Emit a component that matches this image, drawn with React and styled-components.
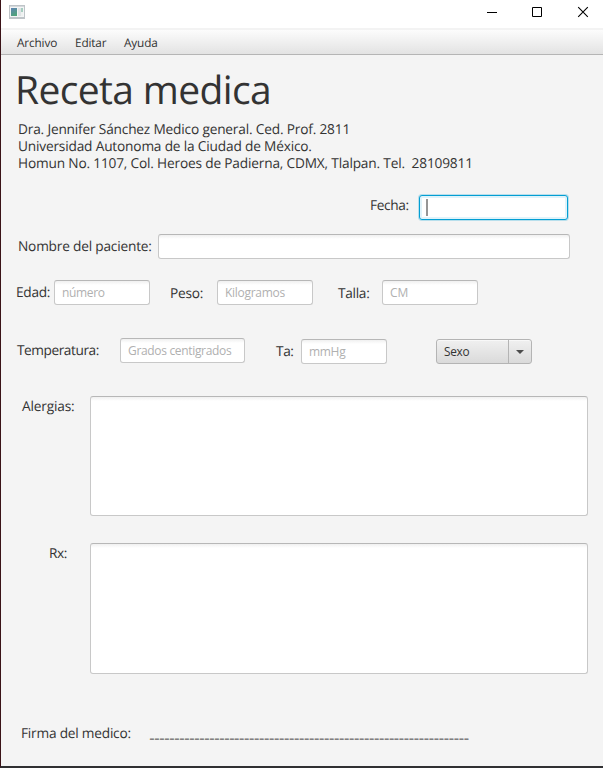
import React from 'react';
import styled, { createGlobalStyle, css } from 'styled-components';

const GlobalStyle = createGlobalStyle`
  * { box-sizing: border-box; }
  html, body { margin: 0; padding: 0; background: #f4f4f4; overflow: hidden; }
  body {
    font-family: 'Open Sans', 'Noto Sans', sans-serif;
    color: #333;
    text-rendering: geometricPrecision;
  }
`;

const Window = styled.div`
  display: flex;
  flex-direction: column;
  width: 603px;
  height: 768px;
  background: #f4f4f4;
  border-left: 1px solid #3a1217;
  border-bottom: 2px solid #303032;
`;

const TitleBar = styled.header`
  display: flex;
  align-items: flex-start;
  justify-content: space-between;
  height: 28px;
  padding: 5px 14px 0 8px;
  background: #fff;
`;

const Controls = styled.div`
  display: flex;
  gap: 34px;
  padding-top: 1px;
  svg { display: block; }
`;

const MenuBar = styled.nav`
  display: flex;
  height: 27px;
  padding-left: 16px;
  border-top: 2px solid #f3f3f3;
  border-bottom: 1px solid #b5b5b5;
  background: linear-gradient(#fcfcfc, #e3e3e3) padding-box;
`;

const MenuItem = styled.span`
  width: ${(p) => p.$w}px;
  font-size: 11.8px;
  line-height: 26px;
  letter-spacing: -0.15px;
`;

const Form = styled.main`
  display: flex;
  flex-direction: column;
  flex: 1;
  padding-top: 10px;
`;

const Title = styled.h1`
  margin: 0 0 6px 14px;
  height: 50px;
  font-size: 39px;
  font-weight: 400;
  line-height: 50px;
  letter-spacing: -0.64px;
`;

const textBase = css`
  font-size: 13.7px;
  line-height: 17px;
  white-space: pre;
  letter-spacing: ${(p) => p.$ls || 0}px;
`;

const InfoLine = styled.p`
  ${textBase}
  margin: 0 0 0 17px;
`;

const Row = styled.div`
  display: flex;
  align-items: flex-start;
  margin-top: ${(p) => p.$gap}px;
  padding-left: ${(p) => p.$left}px;
  height: ${(p) => p.$h || 25}px;
`;

const Label = styled.label`
  ${textBase}
  flex: none;
  width: ${(p) => p.$w}px;
  margin-top: ${(p) => p.$drop || 0}px;
  margin-left: ${(p) => p.$ml || 0}px;
`;

const box = css`
  flex: none;
  display: block;
  margin: ${(p) => p.$drop || 0}px 0 0;
  width: ${(p) => p.$w}px;
  border: 1px solid #c8c8c8;
  border-top-color: #b7b7b7;
  border-radius: 3px;
  outline: none;
  background: linear-gradient(#f0f0f0, #fff 4px);
  color: #333;
  font-family: inherit;
`;

const Input = styled.input`
  ${box}
  height: 25px;
  padding: 0 7px;
  font-size: 12px;
  letter-spacing: ${(p) => p.$ls || 0}px;
  &::placeholder { color: #b0b0b0; opacity: 1; }
`;

const FocusedField = styled.div`
  ${box}
  height: 25px;
  padding: 3px 0 0 6px;
  border-color: #039ed3;
  background: #fff;
  box-shadow: 0 0 0 1px rgba(3, 158, 211, 0.25), inset 0 0 0 2px #e0f3fa;
`;

const Caret = styled.span`
  display: block;
  width: 2px;
  height: 17px;
  background: #969696;
`;

const TextArea = styled.textarea`
  ${box}
  height: ${(p) => p.$h}px;
  resize: none;
`;

const Combo = styled.button`
  display: flex;
  flex: none;
  width: 96px;
  height: 25px;
  margin: 1px 0 0 49px;
  padding: 0;
  border: 1px solid #b4b4b4;
  border-radius: 3px;
  background: linear-gradient(#f0f0f0, #dadada);
  box-shadow: inset 0 1px 0 #f8f8f8;
  color: #333;
  font-family: inherit;
  font-size: 11.8px;
  letter-spacing: -0.25px;
  line-height: 23px;
  text-align: left;
`;

const ComboText = styled.span`
  width: 72px;
  height: 23px;
  padding-left: 7px;
  border-right: 1px solid #b4b4b4;
`;

const ComboArrow = styled.span`
  display: flex;
  flex: 1;
  height: 23px;
  align-items: center;
  justify-content: center;
`;

const SignatureLine = styled.span`
  margin-top: 1px;
  font-size: 9.3px;
  font-weight: 700;
  line-height: 17px;
  letter-spacing: 1.17px;
  white-space: nowrap;
  -webkit-text-stroke: 0.2px #333;
`;

const AppIcon = () => (
  <svg width="16" height="14" viewBox="0 0 16 14" shapeRendering="crispEdges">
    <defs>
      <linearGradient id="pane" x1="0" y1="0" x2="0.4" y2="1">
        <stop offset="0" stopColor="#5f82b4" />
        <stop offset="1" stopColor="#4fa27c" />
      </linearGradient>
    </defs>
    <rect width="16" height="14" fill="#bfc4c8" />
    <rect x="1" y="1" width="14" height="1" fill="#d5d9dc" />
    <rect x="1" y="2" width="14" height="10" fill="#f3f5f6" />
    <rect x="2" y="3" width="6" height="8" fill="url(#pane)" />
    <rect x="9" y="3" width="3" height="8" fill="#dfe3e5" />
    <rect x="12" y="3" width="2" height="4" fill="#a5cdbf" />
    <rect x="12" y="7" width="2" height="4" fill="#eef1f0" />
  </svg>
);

export default function App() {
  return (
    <>
      <GlobalStyle />
      <Window>
        <TitleBar>
          <AppIcon />
          <Controls>
            <svg width="12" height="12"><path d="M2 6.5h10" stroke="#000" /></svg>
            <svg width="12" height="12"><path d="M1.5 1.5h9v9h-9z" fill="none" stroke="#000" /></svg>
            <svg width="12" height="12"><path d="M1.2 1.2l9.6 9.6M10.8 1.2l-9.6 9.6" stroke="#000" strokeWidth="1.1" /></svg>
          </Controls>
        </TitleBar>
        <MenuBar>
          <MenuItem $w={58}>Archivo</MenuItem>
          <MenuItem $w={49}>Editar</MenuItem>
          <MenuItem $w={50}>Ayuda</MenuItem>
        </MenuBar>
        <Form>
          <Title>Receta medica</Title>
          <InfoLine $ls={-0.18}>Dra. Jennifer Sánchez Medico general. Ced. Prof. 2811</InfoLine>
          <InfoLine $ls={-0.18}>Universidad Autonoma de la Ciudad de México.</InfoLine>
          <InfoLine $ls={-0.18}>{'Homun No. 1107, Col. Heroes de Padierna, CDMX, Tlalpan. Tel.  28109811'}</InfoLine>

          <Row $gap={23} $left={369}>
            <Label $w={49} $drop={2} $ls={-0.35}>Fecha:</Label>
            <FocusedField $w={149}><Caret /></FocusedField>
          </Row>

          <Row $gap={14} $left={17}>
            <Label $w={140} $drop={4} $ls={-0.2}>Nombre del paciente:</Label>
            <Input $w={412} />
          </Row>

          <Row $gap={21} $left={15}>
            <Label $w={38} $drop={4} $ls={-0.3}>Edad:</Label>
            <Input $w={96} $ls={-0.35} placeholder="número" />
            <Label $w={47} $ml={20} $drop={5} $ls={-0.25}>Peso:</Label>
            <Input $w={96} $ls={-0.28} placeholder="Kilogramos" />
            <Label $w={44} $ml={25} $drop={5} $ls={-0.3}>Talla:</Label>
            <Input $w={96} placeholder="CM" />
          </Row>

          <Row $gap={33} $left={16} $h={26}>
            <Label $w={103} $drop={4} $ls={-0.45}>Temperatura:</Label>
            <Input $w={125} $ls={-0.33} placeholder="Grados centigrados" />
            <Label $w={25} $ml={31} $drop={5} $ls={-0.4}>Ta:</Label>
            <Input $w={86} $drop={1} $ls={-0.3} placeholder="mmHg" />
            <Combo>
              <ComboText>Sexo</ComboText>
              <ComboArrow>
                <svg width="8" height="4"><path d="M0 0h8L4 4z" fill="#4c4c4c" /></svg>
              </ComboArrow>
            </Combo>
          </Row>

          <Row $gap={32} $left={21} $h={120}>
            <Label $w={68} $drop={2} $ls={-0.17}>Alergias:</Label>
            <TextArea $w={498} $h={120} />
          </Row>

          <Row $gap={27} $left={48} $h={131}>
            <Label $w={41} $drop={2} $ls={-0.4}>Rx:</Label>
            <TextArea $w={498} $h={131} />
          </Row>

          <Row $gap={51} $left={20} $h={18}>
            <Label $w={129} $ls={-0.22}>Firma del medico:</Label>
            <SignatureLine>{'_'.repeat(64)}</SignatureLine>
          </Row>
        </Form>
      </Window>
    </>
  );
}
